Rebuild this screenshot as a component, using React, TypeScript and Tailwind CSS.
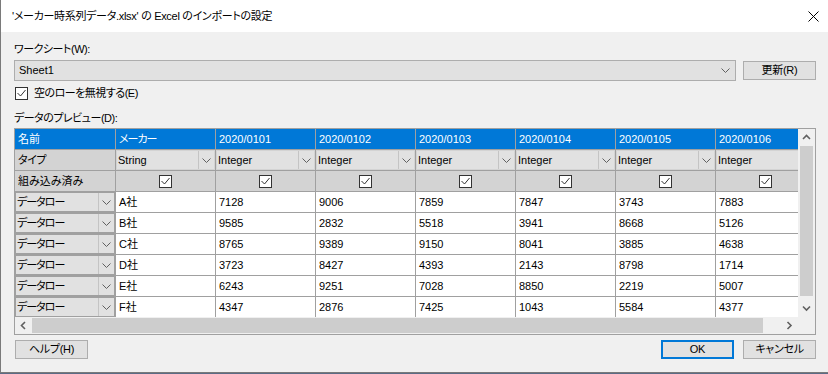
import React from 'react';

const cols = ['メーカー', '2020/0101', '2020/0102', '2020/0103', '2020/0104', '2020/0105', '2020/0106'];
const types = ['String', 'Integer', 'Integer', 'Integer', 'Integer', 'Integer', 'Integer'];
const rows = [
  ['A社', '7128', '9006', '7859', '7847', '3743', '7883'],
  ['B社', '9585', '2832', '5518', '3941', '8668', '5126'],
  ['C社', '8765', '9389', '9150', '8041', '3885', '4638'],
  ['D社', '3723', '8427', '4393', '2143', '8798', '1714'],
  ['E社', '6243', '9251', '7028', '8850', '2219', '5007'],
  ['F社', '4347', '2876', '7425', '1043', '5584', '4377'],
];

const Chevron = ({ className = '' }: { className?: string }) => (
  <svg width="9" height="5" viewBox="0 0 9 5" className={className}>
    <polyline points="0.5,0.5 4.5,4.5 8.5,0.5" fill="none" stroke="#606060" strokeWidth="1" />
  </svg>
);

const Arrow = ({ dir }: { dir: 'up' | 'down' | 'left' | 'right' }) => {
  const pts = {
    up: '1,5 4.5,1.5 8,5',
    down: '1,1.5 4.5,5 8,1.5',
    left: '5,1 1.5,4.5 5,8',
    right: '1.5,1 5,4.5 1.5,8',
  }[dir];
  const vertical = dir === 'up' || dir === 'down';
  return (
    <svg width={vertical ? 9 : 7} height={vertical ? 7 : 9} viewBox={vertical ? '0 0 9 7' : '0 0 7 9'}>
      <polyline points={pts} fill="none" stroke="#606060" strokeWidth="1.6" />
    </svg>
  );
};

const Check = ({ className = '' }: { className?: string }) => (
  <div className={`w-[13px] h-[13px] border border-[#333] bg-white flex items-center justify-center ${className}`}>
    <svg width="9" height="8" viewBox="0 0 9 8">
      <polyline points="0.5,4 3.5,7 8.5,1" fill="none" stroke="#333" strokeWidth="1" />
    </svg>
  </div>
);

const Button = ({ label, primary = false }: { label: string; primary?: boolean }) => (
  <div
    className={`w-[73px] h-[19px] flex items-center justify-center bg-[#e1e1e1] text-[11px] tracking-[-0.3px] text-black ${
      primary ? 'border-2 border-[#0078d7]' : 'border border-[#adadad]'
    }`}
  >
    {label}
  </div>
);

export default function App() {
  return (
    <div className="w-[828px] h-[374px] bg-[#5b6b85] overflow-hidden">
      <div className="w-[828px] h-[373px] bg-[#f0f0f0] border-l border-b border-[#7a7a7a] flex flex-col font-['Liberation_Sans','Noto_Sans_CJK_JP',sans-serif] [font-feature-settings:'palt'] text-black">
        {/* Title bar */}
        <div className="h-[32px] bg-white flex items-center justify-between pl-[11px] pr-[9px] shrink-0">
          <span className="text-[11px] tracking-[-0.3px]">'メーカー時系列データ.xlsx' の Excel のインポートの設定</span>
          <svg width="11" height="11" viewBox="0 0 11 11">
            <line x1="0.5" y1="0.5" x2="10.5" y2="10.5" stroke="#000" strokeWidth="1" />
            <line x1="10.5" y1="0.5" x2="0.5" y2="10.5" stroke="#000" strokeWidth="1" />
          </svg>
        </div>

        <div className="flex flex-col pl-[13px] pr-[12px]">
          <div className="mt-[9px] h-[16px] text-[11px] tracking-[-0.5px] leading-[16px]">ワークシート(W):</div>

          <div className="mt-[3px] flex items-center gap-[7px]">
            <div className="w-[722px] h-[21px] bg-[#e1e1e1] border border-[#adadad] flex items-center justify-between pl-[4px] pr-[5px] text-[11px]">
              <span>Sheet1</span>
              <Chevron />
            </div>
            <Button label="更新(R)" />
          </div>

          <div className="mt-[4px] h-[16px] flex items-center gap-[6px] text-[11px] tracking-[-0.5px]">
            <Check className="ml-px" />
            <span>空のローを無視する(E)</span>
          </div>

          <div className="mt-[9px] h-[16px] text-[11px] tracking-[-0.5px] leading-[16px]">データのプレビュー(D):</div>

          {/* Preview grid */}
          <div className="mt-[2px] w-[802px] border border-[#a0a0a0] bg-[#f0f0f0] text-[11px]">
            <div className="flex">
              <div className="w-[783px] h-[188px] overflow-hidden bg-white">
                {/* header */}
                <div className="flex h-[21px] w-[801px] border-b border-[#a0a0a0] bg-[#0078d7] text-white">
                  <div className="w-[101px] shrink-0 border-r border-[#a0a0a0] pl-[3px] flex items-center">名前</div>
                  {cols.map((c, i) => (
                    <div
                      key={c}
                      className={`w-[100px] shrink-0 border-r border-[#a0a0a0] pl-[3px] flex items-center ${i === 0 ? 'tracking-[-1px]' : ''}`}
                    >
                      {c}
                    </div>
                  ))}
                </div>
                {/* type row */}
                <div className="flex h-[21px] w-[801px] border-b border-[#a0a0a0] bg-[#d3d3d3]">
                  <div className="w-[101px] shrink-0 border-r border-[#a0a0a0] pl-[3px] flex items-center tracking-[-0.5px]">タイプ</div>
                  {types.map((t, i) => (
                    <div key={i} className="w-[100px] shrink-0 border-r border-[#a0a0a0] p-px">
                      <div className="h-full bg-[#e1e1e1] flex items-center">
                        <span className="flex-1 pl-[1px]">{t}</span>
                        <div className="w-[16px] h-full border-l border-[#c4c4c4] flex items-center justify-center">
                          <Chevron />
                        </div>
                      </div>
                    </div>
                  ))}
                </div>
                {/* included row */}
                <div className="flex h-[21px] w-[801px] border-b border-[#a0a0a0] bg-[#d3d3d3]">
                  <div className="w-[101px] shrink-0 border-r border-[#a0a0a0] pl-[3px] flex items-center">組み込み済み</div>
                  {types.map((_, i) => (
                    <div key={i} className="w-[100px] shrink-0 border-r border-[#a0a0a0] flex items-center justify-center">
                      <Check />
                    </div>
                  ))}
                </div>
                {/* data rows */}
                {rows.map((r) => (
                  <div key={r[0]} className="flex h-[21px] w-[801px] border-b border-[#a0a0a0]">
                    <div className="w-[101px] shrink-0 border-r border-[#a0a0a0] bg-[#a0a0a0] p-px">
                      <div className="h-full bg-[#e1e1e1] flex items-center">
                        <span className="flex-1 pl-[1px] tracking-[-1px]">データロー</span>
                        <div className="w-[16px] h-full border-l border-[#c4c4c4] flex items-center justify-center">
                          <Chevron />
                        </div>
                      </div>
                    </div>
                    {r.map((v, i) => (
                      <div key={i} className="w-[100px] shrink-0 border-r border-[#a0a0a0] pl-[3px] flex items-center">
                        {v}
                      </div>
                    ))}
                  </div>
                ))}
              </div>
              {/* vertical scrollbar */}
              <div className="w-[17px] h-[188px] bg-[#f0f0f0] flex flex-col">
                <div className="h-[17px] flex items-center justify-center">
                  <Arrow dir="up" />
                </div>
                <div className="h-[150px] mx-[2px] bg-[#cdcdcd]" />
                <div className="flex-1" />
                <div className="h-[17px] flex items-center justify-center">
                  <Arrow dir="down" />
                </div>
              </div>
            </div>
            {/* horizontal scrollbar */}
            <div className="flex h-[17px]">
              <div className="w-[783px] flex bg-[#f0f0f0]">
                <div className="w-[17px] flex items-center justify-center">
                  <Arrow dir="left" />
                </div>
                <div className="w-[731px] my-[1px] bg-[#cdcdcd]" />
                <div className="flex-1" />
                <div className="w-[17px] flex items-center justify-center">
                  <Arrow dir="right" />
                </div>
              </div>
              <div className="w-[17px] bg-[#f0f0f0]" />
            </div>
          </div>

          {/* footer buttons */}
          <div className="mt-[5px] flex items-center justify-between pl-[1px]">
            <Button label="ヘルプ(H)" />
            <div className="flex gap-[9px]">
              <Button label="OK" primary />
              <Button label="キャンセル" />
            </div>
          </div>
        </div>
      </div>
    </div>
  );
}
